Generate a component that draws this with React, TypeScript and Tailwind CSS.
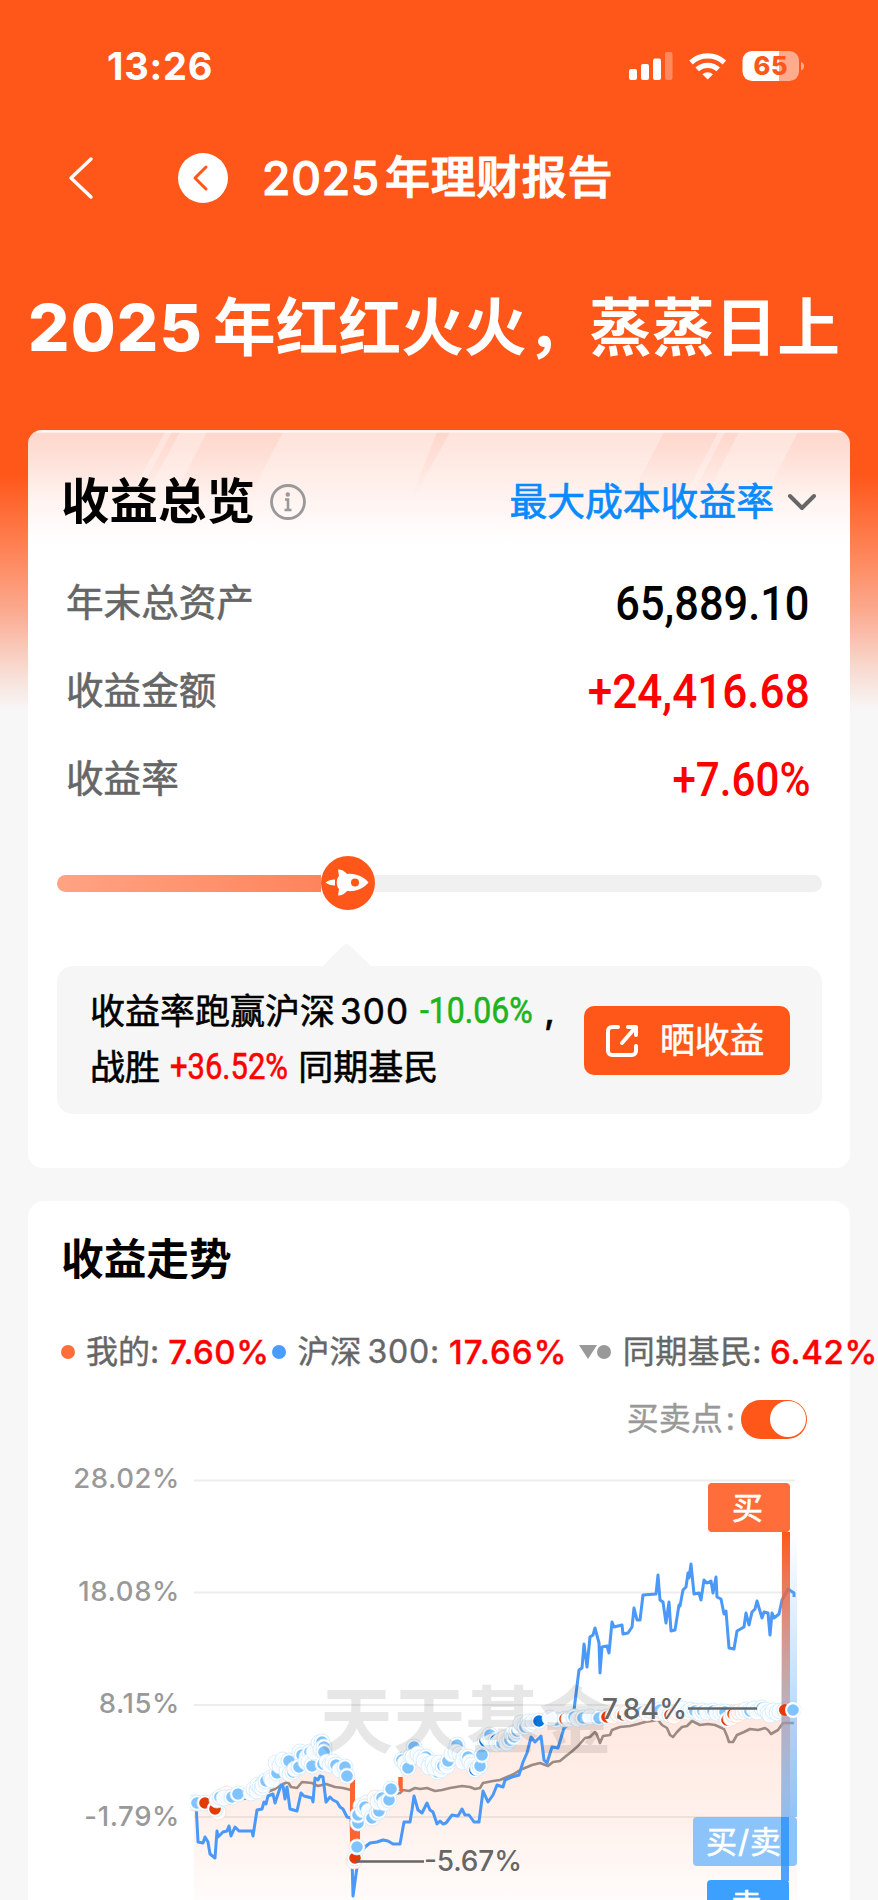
import type { ReactNode } from "react";

type Dot = [x: number, y: number, tone?: "red" | "navy" | "ghost" | "redGhost"];

const summaryRows = [
  { label: "年末总资产", value: "65,889.10", color: "text-black scale-x-[0.885]" },
  { label: "收益金额", value: "+24,416.68", color: "text-[#ff0000] scale-x-[0.900]" },
  { label: "收益率", value: "+7.60%", color: "text-[#ff0000] scale-x-[0.860]" },
];

const axisLabels = ["28.02%", "18.08%", "8.15%", "-1.79%"];

const gridLines = [1480.5, 1592.5, 1705, 1817];

const indexLine =
  "196,1803 198,1842 203,1843 205,1837 208,1842 210,1854 215,1858 217,1831 218,1837 223,1832 227,1831 229,1826 231,1836 235,1827 239,1831 252,1831 253,1836 257,1810 262,1809 264,1802 266,1804 268,1796 273,1794 275,1803 281,1785 283,1786 285,1799 287,1787 290,1809 297,1811 301,1793 304,1796 312,1798 313,1802 315,1778 318,1780 320,1776 323,1777 326,1802 330,1797 333,1800 337,1802 340,1807 343,1809 347,1817 351,1818 353,1896 357,1867 360,1853 365,1847 370,1843 377,1842 383,1840 388,1841 393,1844 400,1844 404,1822 410,1822 412,1810 414,1796 418,1810 422,1813 427,1803 430,1810 433,1812 437,1824 440,1821 443,1824 446,1823 452,1815 458,1816 462,1809 465,1815 469,1815 474,1822 479,1822 483,1791 488,1802 493,1795 497,1785 503,1787 505,1780 512,1777 519,1775 523,1762 527,1753 531,1737 535,1742 541,1736 544,1760 547,1763 552,1747 558,1748 564,1728 569,1724 574,1710 579,1670 582,1668 584,1644 587,1667 590,1637 593,1635 595,1628 599,1643 600,1673 602,1647 607,1646 609,1653 612,1622 614,1627 622,1625 623,1634 628,1633 632,1627 634,1608 637,1620 640,1620 643,1595 656,1594 658,1575 660,1600 663,1602 666,1623 669,1602 671,1631 675,1630 679,1605 680,1606 683,1590 686,1587 688,1573 689,1578 691,1564 694,1594 699,1593 701,1600 704,1580 707,1583 711,1581 713,1593 716,1577 717,1597 721,1599 724,1614 726,1611 729,1648 734,1649 737,1631 744,1627 746,1613 749,1625 752,1612 755,1609 757,1601 762,1618 764,1612 768,1613 770,1635 772,1613 774,1618 779,1614 782,1600 788,1589 794,1593 794,1597";

const peersLine =
  "196,1803 215,1806 235,1800 250,1798 262,1794 275,1789 283,1784 288,1782 291,1787 297,1788 302,1782 312,1783 318,1786 326,1784 335,1787 343,1788 351,1790 354,1812 357,1806 366,1801 382,1796 400,1793 403,1790 409,1791 415,1788 420,1789 427,1788 435,1791 442,1790 450,1788 462,1786 470,1787 475,1789 480,1788 483,1783 493,1781 500,1780 507,1777 514,1774 520,1770 532,1765 540,1763 548,1766 553,1762 560,1761 566,1756 570,1753 578,1746 585,1738 590,1737 595,1732 597,1735 600,1743 603,1736 610,1735 612,1730 620,1727 630,1726 638,1724 645,1722 658,1720 662,1725 667,1728 670,1735 673,1737 677,1732 682,1727 687,1726 692,1721 700,1725 708,1724 715,1725 724,1729 727,1736 729,1742 733,1742 737,1735 744,1732 750,1729 758,1730 765,1728 768,1730 771,1734 778,1730 783,1723 794,1723";

const mineArea =
  "M194 1900V1803L205 1803 215 1810 222 1797 240 1793 255 1790 268 1781 280 1772 290 1766 300 1760 312 1758 322 1750 330 1764 347 1774 352 1782 353 1858 358 1822 366 1808 378 1812 390 1795 400 1790 402 1762 416 1752 430 1764 440 1768 457 1752 470 1764 482 1756 490 1738 502 1740 515 1732 530 1722 560 1719 610 1716 650 1712 700 1711 730 1715 760 1710 797 1710V1900Z";

const dots: Dot[] = [
  [194, 1803, "ghost"], [197, 1803], [205, 1803, "red"], [218, 1812, "redGhost"], [215, 1809, "red"],
  [217, 1800, "ghost"], [220, 1797], [227, 1794, "redGhost"], [224, 1798, "ghost"], [232, 1797], [238, 1794],
  [251, 1793, "ghost"], [254, 1789, "ghost"], [257, 1791, "ghost"], [258, 1785, "ghost"], [260, 1787],
  [262, 1788, "ghost"], [264, 1782, "ghost"], [263, 1785, "ghost"], [266, 1781], [271, 1778, "ghost"], [272, 1780, "ghost"],
  [277, 1773], [276, 1763, "ghost"], [280, 1766, "ghost"], [283, 1760, "ghost"], [287, 1772, "ghost"],
  [289, 1761], [290, 1774, "ghost"], [293, 1772], [295, 1769, "ghost"], [300, 1752, "ghost"], [302, 1755],
  [299, 1767], [307, 1757, "ghost"], [306, 1762, "ghost"], [310, 1752], [309, 1762, "ghost"], [312, 1766],
  [314, 1752, "ghost"], [319, 1743, "ghost"], [322, 1742], [321, 1749, "ghost"], [324, 1747], [324, 1752],
  [323, 1764], [327, 1762, "ghost"], [330, 1765, "ghost"], [333, 1762, "ghost"], [336, 1765], [340, 1770, "ghost"],
  [345, 1767], [347, 1776],
  [354, 1861, "redGhost"], [355, 1858, "red"], [357, 1847],
  [361, 1806, "ghost"], [367, 1803, "ghost"], [358, 1823], [358, 1815], [363, 1810, "ghost"], [365, 1807],
  [369, 1811, "ghost"], [372, 1818], [375, 1798, "redGhost"], [377, 1813], [379, 1811], [378, 1802, "ghost"],
  [382, 1798], [385, 1803, "ghost"], [389, 1800], [391, 1789],
  [402, 1760], [405, 1763, "ghost"], [408, 1768], [411, 1756, "ghost"], [414, 1747], [413, 1757, "ghost"],
  [418, 1754, "ghost"], [421, 1758, "ghost"], [426, 1757], [424, 1761, "ghost"], [430, 1764, "red"],
  [429, 1767, "ghost"], [433, 1763, "ghost"], [437, 1772], [435, 1768, "ghost"], [441, 1770, "ghost"], [439, 1763, "ghost"],
  [443, 1766], [447, 1766, "ghost"], [448, 1761], [452, 1754, "ghost"], [457, 1745], [456, 1752, "ghost"],
  [460, 1754, "ghost"], [464, 1757, "ghost"], [463, 1762, "ghost"], [468, 1757], [470, 1762, "ghost"], [472, 1765, "ghost"],
  [475, 1770, "navy"], [478, 1768, "ghost"], [480, 1766], [482, 1755], [485, 1741, "navy"], [488, 1738, "ghost"],
  [490, 1735], [491, 1742, "ghost"], [496, 1740, "navy"], [497, 1744, "ghost"], [500, 1741, "ghost"], [502, 1743],
  [505, 1738, "redGhost"], [507, 1743, "ghost"], [510, 1740], [512, 1734, "ghost"], [514, 1737], [516, 1733, "ghost"], [517, 1731],
  [520, 1728, "ghost"], [521, 1723, "ghost"], [525, 1727], [528, 1722, "ghost"], [529, 1725, "ghost"], [533, 1722, "ghost"],
  [539, 1721, "navy"], [556, 1720], [550, 1718, "ghost"], [565, 1719, "red"], [569, 1719, "ghost"], [574, 1717],
  [578, 1719, "ghost"], [583, 1718], [590, 1717, "ghost"], [599, 1718], [607, 1717, "red"], [613, 1716, "redGhost"],
  [618, 1714, "redGhost"], [623, 1715, "red"], [627, 1713, "redGhost"], [632, 1714, "red"], [636, 1712, "ghost"],
  [642, 1712], [647, 1713, "redGhost"], [652, 1711, "ghost"], [657, 1713, "redGhost"], [660, 1710], [665, 1713, "ghost"],
  [670, 1715, "red"], [674, 1716, "redGhost"], [678, 1712, "redGhost"], [683, 1709, "ghost"], [688, 1712, "ghost"],
  [691, 1710, "ghost"], [695, 1711], [700, 1713, "ghost"], [703, 1711], [707, 1712, "ghost"], [713, 1711],
  [717, 1713, "ghost"], [721, 1712, "ghost"], [725, 1712], [727, 1720, "red"], [731, 1718, "redGhost"],
  [733, 1714, "red"], [737, 1715, "redGhost"], [739, 1712, "redGhost"], [743, 1712, "redGhost"], [746, 1710, "ghost"],
  [750, 1711], [754, 1709, "ghost"], [757, 1712, "ghost"], [762, 1708], [765, 1710, "ghost"], [768, 1713, "ghost"],
  [770, 1715, "ghost"], [773, 1711, "ghost"], [777, 1713, "ghost"], [780, 1711, "ghost"], [785, 1710, "red"], [793, 1710],
];

const dotFill = {
  blue: "#7fc4ff",
  red: "#e33b05",
  navy: "#0a76dc",
  ghost: "#f4faff",
  redGhost: "#fff3ee",
};

function Num({ children, className = "" }: { children: ReactNode; className?: string }) {
  return <span className={`inline-block whitespace-nowrap font-['Roboto'] ${className}`}>{children}</span>;
}

function StatusBar() {
  return (
    <div className="flex h-[131px] items-center justify-between pl-[107px] pr-[73px] text-white">
      <span className="text-[38px] font-bold leading-none tracking-[0.8px]">13:26</span>
      <svg viewBox="628 46 177 38" className="h-[38px] w-[177px]" aria-hidden="true">
        <g fill="#fff">
          <rect x="629" y="68" width="8" height="11" rx="2" />
          <rect x="641" y="63" width="8" height="16" rx="2" />
          <rect x="653" y="57.500" width="8" height="21.500" rx="2" />
          <rect x="665" y="51" width="7.500" height="28" rx="2" opacity="0.3" />
        </g>
        <g fill="none" stroke="#fff" strokeWidth="5.200">
          <path d="M691 61.500a24.500 24.500 0 0 1 33.400 0" />
          <path d="M697.200 68.400a15.500 15.500 0 0 1 21 0" />
        </g>
        <path d="M707.700 78.600l-5.300-5.300a8 8 0 0 1 10.600 0Z" fill="#fff" />
        <path d="M779 50h10.500a9.500 9.500 0 0 1 9.500 9.500v11a9.500 9.500 0 0 1-9.500 9.500H779Z" fill="#ffab8c" />
        <path d="M779 50h-27a9.500 9.500 0 0 0-9.500 9.500v11a9.500 9.500 0 0 0 9.500 9.500h27Z" fill="#fff" />
        <path d="M801 61v8.500c2-.6 3-2.200 3-4.200s-1-3.700-3-4.300Z" fill="#ffab8c" />
        <text x="771" y="74" textAnchor="middle" fontSize="25.500" fontWeight="800" letterSpacing="0.800" fill="#ff571a">
          65
        </text>
      </svg>
    </div>
  );
}

function NavBar() {
  return (
    <div className="flex h-[94px] items-center pl-[66px] text-white">
      <svg viewBox="0 0 30 46" className="h-[46px] w-[30px]" fill="none" stroke="currentColor" strokeWidth="3.400" strokeLinecap="round" strokeLinejoin="round" aria-hidden="true">
        <path d="M25 4 5 23l20 19" />
      </svg>
      <span className="ml-[82px] flex size-[50px] items-center justify-center rounded-full bg-white">
        <svg viewBox="0 0 20 28" className="mr-[4px] h-[28px] w-[20px]" fill="none" stroke="#ff571a" strokeWidth="3" strokeLinecap="round" strokeLinejoin="round" aria-hidden="true">
          <path d="M15 3 4 14l11 11" />
        </svg>
      </span>
      <h1 className="ml-[34px] flex text-[45px] font-medium leading-none tracking-[0.6px] [-webkit-text-stroke:1.100px_currentColor]">
        <span className="mr-[5px] text-[46px] tracking-[0.8px]">2025</span>年理财报告
      </h1>
    </div>
  );
}

function CardShine() {
  return (
    <svg viewBox="28 430 822 120" className="absolute left-0 top-0 h-[120px] w-[822px]" preserveAspectRatio="none" aria-hidden="true">
      <defs>
        <linearGradient id="shine" x1="0" y1="430" x2="0" y2="500" gradientUnits="userSpaceOnUse">
          <stop offset="0" stopColor="#ff9b80" stopOpacity="0.180" />
          <stop offset="1" stopColor="#ff9b80" stopOpacity="0" />
        </linearGradient>
      </defs>
      <g fill="url(#shine)">
        <path d="M28 432H165L128 500H28Z" />
        <path d="M172 432h8l-37 68h-8Z" />
        <path d="M207 432h76l-35 68h-76Z" />
        <path d="M437 432h13l-37 68h-3Z" />
        <path d="M664 432h54l-35 68h-54Z" />
        <path d="M725 432h14l-35 68h-14Z" />
        <path d="M798 432h52v68h-87Z" />
      </g>
      <path d="M36 431.500H842" stroke="#fff" strokeWidth="2.500" opacity="0.700" />
    </svg>
  );
}

function Overview() {
  return (
    <section className="relative mx-[28px] h-[738px] overflow-hidden rounded-[14px] bg-white bg-[linear-gradient(180deg,#fee2da_0,#fff1ed_60px,#ffffff_112px)] pl-[29px] pr-[28px] pt-[28px]">
      <CardShine />
      <div className="relative flex h-[88px] items-center justify-between pl-[4px] pr-[4px]">
        <div className="flex items-center">
          <h2 className="text-[48.500px] font-bold leading-none text-black">收益总览</h2>
          <svg viewBox="0 0 38 38" className="ml-[14px] size-[38px]" fill="none" stroke="#999" strokeWidth="2.800" aria-hidden="true">
            <circle cx="19" cy="19" r="16.500" />
            <path d="M16 16.500h3V27M15.500 27h7" strokeWidth="2.600" />
            <circle cx="18.800" cy="11.500" r="2.200" fill="#999" stroke="none" />
          </svg>
        </div>
        <div className="flex items-center text-[37.800px] leading-none text-[#0a8aff] [-webkit-text-stroke:0.700px_currentColor]">
          最大成本收益率
          <svg viewBox="0 0 32 22" className="ml-[12px] h-[22px] w-[32px]" fill="none" stroke="#666" strokeWidth="4" strokeLinecap="round" strokeLinejoin="round" aria-hidden="true">
            <path d="m4 5 12 12L28 5" />
          </svg>
        </div>
      </div>

      <dl className="relative mt-[13px] pl-[9px] pr-[12px]">
        {summaryRows.map((row) => (
          <div key={row.label} className="flex h-[88px] items-center justify-between">
            <dt className="text-[37.600px] leading-none text-[#666] [-webkit-text-stroke:0.600px_currentColor]">{row.label}</dt>
            <dd className="leading-none">
              <Num className={`origin-right text-[49px] font-medium ${row.color}`}>{row.value}</Num>
            </dd>
          </div>
        ))}
      </dl>

      <div className="mt-[33px] flex h-[54px] items-center">
        <div className="h-[17px] w-[264px] rounded-l-full bg-linear-to-r from-[#ffa382] to-[#ff845c]" />
        <svg viewBox="0 0 54 54" className="relative z-10 size-[54px] shrink-0" aria-hidden="true">
          <circle cx="27" cy="27" r="27" fill="#ff571a" />
          <path d="M17 13.500c4 0 7 2 9 4.500 9-1 17 3 21.500 8.500C43 32 35 36 26 35c-2 2.500-5 4.500-9 4.500L18 33c-3-3-3-10 0-13Z" fill="#fff" />
          <circle cx="34" cy="26.500" r="4" fill="#ff571a" />
          <path d="M14 23.500c-4 0-7 1-9.500 3 2.500 2 5.500 3 9.500 3Z" fill="#fff" />
        </svg>
        <div className="-ml-1 h-[17px] flex-1 rounded-r-full bg-[#f0f0f0]" />
      </div>

      <svg viewBox="0 0 48 23" className="ml-[266px] mt-[33px] h-[23px] w-[48px]" aria-hidden="true">
        <path d="M0 23 20.500 2.500a4 4 0 0 1 6 0L48 23Z" fill="#f6f6f6" />
      </svg>
      <div className="flex h-[148px] items-start justify-between rounded-[16px] bg-[#f6f6f6] pl-[33px] pr-[32px]">
        <div className="mt-[17px] whitespace-nowrap text-[35px] leading-[56px] text-black [-webkit-text-stroke:0.600px_currentColor]">
          <p className="flex h-[56px] items-center">
            收益率跑赢沪深<span className="ml-[5px] tracking-[1.200px]">300</span>
            <Num className="ml-[11px] -mr-[17px] origin-left scale-x-[0.890] text-[36px] text-[#1db41d]">-10.06%</Num>
            <span className="ml-[14px] font-medium">,</span>
          </p>
          <p className="flex h-[56px] items-center">
            战胜
            <Num className="ml-[10px] -mr-[20px] origin-left scale-x-[0.860] text-[36px] text-[#ff0000]">+36.52%</Num>
            <span className="ml-[11px]">同期基民</span>
          </p>
        </div>
        <button type="button" className="mt-[40px] flex h-[69px] w-[206px] items-center rounded-[10px] bg-[#ff571a] pl-[20px] text-[34.800px] leading-none text-white [-webkit-text-stroke:0.600px_currentColor]">
          <svg viewBox="0 0 36 36" className="size-[36px]" fill="none" stroke="currentColor" strokeWidth="4" strokeLinecap="round" strokeLinejoin="round" aria-hidden="true">
            <path d="M14 4H8a4 4 0 0 0-4 4v20a4 4 0 0 0 4 4h20a4 4 0 0 0 4-4v-5" />
            <path d="M24 4h8v8M31 5 18 20" />
          </svg>
          <span className="ml-[20px]">晒收益</span>
        </button>
      </div>
    </section>
  );
}

function Flag({ x, y, width, label, fill }: { x: number; y: number; width: number; label: string; fill: string }) {
  return (
    <g>
      <rect x={x} y={y} width={width} height="49" rx="4" fill={fill} />
      <text x={x + width / 2 - 1} y={y + 36} textAnchor="middle" fontSize="31" letterSpacing="1" fill="#fff" stroke="#fff" strokeWidth="0.600">
        {label}
      </text>
    </g>
  );
}

function TrendChart() {
  return (
    <svg viewBox="190 1460 660 440" className="h-[440px] w-[660px] shrink-0" role="img" aria-label="收益走势">
      <defs>
        <linearGradient id="area" x1="0" y1="1700" x2="0" y2="1900" gradientUnits="userSpaceOnUse">
          <stop offset="0" stopColor="#ff571a" stopOpacity="0.140" />
          <stop offset="0.550" stopColor="#ff571a" stopOpacity="0.090" />
          <stop offset="1" stopColor="#ff571a" stopOpacity="0.020" />
        </linearGradient>
        <linearGradient id="buyPole" x1="0" y1="1532" x2="0" y2="1850" gradientUnits="userSpaceOnUse">
          <stop offset="0" stopColor="#ff571a" />
          <stop offset="1" stopColor="#ff571a" stopOpacity="0.100" />
        </linearGradient>
        <linearGradient id="mixPole" x1="0" y1="1530" x2="0" y2="1817" gradientUnits="userSpaceOnUse">
          <stop offset="0" stopColor="#6fb6fb" stopOpacity="0" />
          <stop offset="1" stopColor="#6fb6fb" stopOpacity="0.900" />
        </linearGradient>
      </defs>

      {gridLines.map((y) => (
        <path key={y} d={`M194 ${y}H795`} stroke="#ededed" strokeWidth="2" />
      ))}

      <path d={mineArea} fill="url(#area)" />
      <g fill="none" strokeLinejoin="round">
        <polyline points={peersLine} stroke="#9c8a83" strokeWidth="2.600" />
        <polyline points={indexLine} stroke="#4a98f7" strokeWidth="3" />
      </g>
      <g stroke="#ff6430" fill="none">
        <path d="M352.500 1780V1856" strokeWidth="5" />
        <path d="M357.500 1828V1848" strokeWidth="5" />
        <path d="M400.500 1777V1791" strokeWidth="4.500" />
      </g>

      {dots.map(([x, y, tone], i) => (
        <g key={i}>
          <circle cx={x} cy={y} r="8" fill="#fff" stroke={tone === "redGhost" ? "#ffd9ca" : "#cfe8fd"} strokeWidth="0.800" />
          <circle cx={x} cy={y} r="5.800" fill={dotFill[tone ?? "blue"]} />
        </g>
      ))}

      <text x="320" y="1747" fontSize="73" fontWeight="700" fill="#000" opacity="0.090" textLength="292">
        天天基金
      </text>

      <rect x="782" y="1532" width="8" height="318" fill="url(#buyPole)" />
      <rect x="781" y="1530" width="16" height="287" fill="url(#mixPole)" opacity="0.850" />
      <Flag x={708} y={1483} width={82} label="买" fill="#ff6e3a" />
      <Flag x={693} y={1817} width={104} label="买/卖" fill="#8cc3f8" />
      <rect x="781" y="1817" width="8" height="64" fill="#3393fa" opacity="0.850" />
      <Flag x={707} y={1880} width={82} label="卖" fill="#3ba0ff" />
      <circle cx="785" cy="1710" r="5.800" fill="#e33b05" />
      <circle cx="793" cy="1710" r="8" fill="#fff" />
      <circle cx="793" cy="1710" r="5.800" fill="#7fc4ff" />

      <g stroke="#666" strokeWidth="2.500">
        <path d="M355 1861.500H424" />
        <path d="M688 1708.500H757" />
      </g>
      <g fontSize="28" fontWeight="500" fill="#666">
        <text x="602" y="1719" textLength="85">7.84%</text>
        <text x="424" y="1871" textLength="98">-5.67%</text>
      </g>
    </svg>
  );
}

function Trend() {
  return (
    <section className="mx-[28px] mt-[33px] h-[699px] rounded-t-[16px] bg-white pt-[29px]">
      <h2 className="flex h-[60px] items-center pl-[33px] text-[42.700px] font-bold leading-none text-black">收益走势</h2>

      <div className="mt-[42px] flex h-[40px] w-[850px] items-center whitespace-nowrap pl-[33px] text-[32px] leading-none text-[#666] [-webkit-text-stroke:0.400px_currentColor]">
        <div className="flex w-[211px] items-center">
          <span className="size-[14px] shrink-0 rounded-full bg-[#ff6e3a]" />
          <span className="ml-[11px]">我的:</span>
          <span className="ml-[9px] text-[33px] font-medium tracking-[0.500px] text-[#ff0000]">7.60%</span>
        </div>
        <div className="flex w-[308px] items-center">
          <span className="size-[14px] shrink-0 rounded-full bg-[#4a9dff]" />
          <span className="ml-[12px]">沪深</span>
          <span className="ml-[6px] tracking-[0.800px]">300:</span>
          <span className="ml-[9px] text-[33px] font-medium tracking-[1.100px] text-[#ff0000]">17.66%</span>
        </div>
        <div className="flex items-center">
          <svg viewBox="0 0 18 14" className="h-[14px] w-[18px]" fill="#999" aria-hidden="true">
            <path d="M0 0h18L9 14Z" />
          </svg>
          <span className="size-[14px] shrink-0 rounded-full bg-[#999]" />
          <span className="ml-[12px] tracking-[0.400px]">同期基民:</span>
          <span className="ml-[8px] text-[33px] font-medium tracking-[0.700px] text-[#ff0000]">6.42%</span>
        </div>
      </div>

      <div className="mt-[27px] flex h-[40px] items-center justify-end pr-[43px] text-[32px] leading-none text-[#999] [-webkit-text-stroke:0.400px_currentColor]">
        买卖点<span className="ml-[3px]">:</span>
        <span className="ml-[6px] flex h-[39px] w-[66px] items-center justify-end rounded-full bg-[#ff571a] pr-[1.500px]">
          <span className="size-[36px] rounded-full bg-white" />
        </span>
      </div>

      <div className="mt-[21px] flex">
        <ul className="flex w-[162px] shrink-0 flex-col pr-[10px] text-right text-[27.500px] font-medium tracking-[0.600px] text-[#999]">
          {axisLabels.map((label) => (
            <li key={label} className="h-[112.500px] leading-[36px]">
              {label}
            </li>
          ))}
        </ul>
        <TrendChart />
      </div>
    </section>
  );
}

export default function App() {
  return (
    <main className="h-[1900px] w-[878px] overflow-hidden bg-[#f7f7f7] bg-[linear-gradient(180deg,#ff571a_0,#ff571a_475px,#ff8052_545px,#fba98e_610px,#f8dbd1_670px,#f7f7f7_710px)] font-['Inter','Noto_Sans_CJK_SC',sans-serif]">
      <StatusBar />
      <NavBar />
      <h2 className="flex h-[205px] items-center whitespace-nowrap pl-[28px] text-[62.700px] font-bold leading-none text-white">
        <span className="mr-[10px] text-[65px] font-extrabold tracking-[1.200px]">2025</span>年红红火火，蒸蒸日上
      </h2>
      <Overview />
      <Trend />
    </main>
  );
}
